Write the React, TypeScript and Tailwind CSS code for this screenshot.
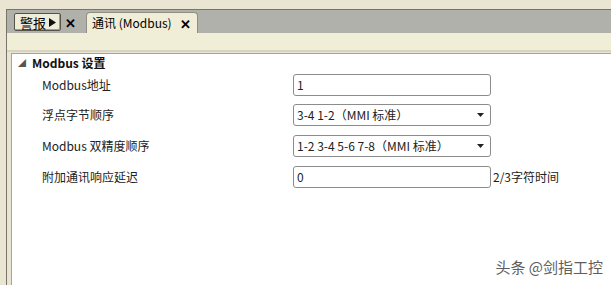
import React from "react";

const font = { fontFamily: '"Noto Sans CJK SC", "Noto Sans", sans-serif' };

type Row = { label: string; value: string; kind: "input" | "select"; suffix?: string; gap: string };

const rows: Row[] = [
  { label: "Modbus地址", value: "1", kind: "input", gap: "mt-[0px]" },
  { label: "浮点字节顺序", value: "3-4 1-2（MMI 标准）", kind: "select", gap: "mt-[8px]" },
  { label: "Modbus 双精度顺序", value: "1-2 3-4 5-6 7-8（MMI 标准）", kind: "select", gap: "mt-[9px]" },
  { label: "附加通讯响应延迟", value: "0", kind: "input", suffix: "2/3字符时间", gap: "mt-[9px]" },
];

const Field = ({ row }: { row: Row }) => (
  <div className={`flex items-center h-[22px] ${row.gap}`}>
    <div className="w-[281px] text-[12px] text-[#222] pl-[30px]">{row.label}</div>
    <div className="w-[198px] h-[22px] rounded-[3px] border border-[#8c8c8c] bg-white flex items-center px-[3px] text-[12px] text-[#222]">
      <span className="flex-1">{row.value}</span>
      {row.kind === "select" && (
        <svg width="7" height="4" viewBox="0 0 7 4" className="mr-[3px]">
          <path d="M0 0 L7 0 L3.5 4 Z" fill="#222" />
        </svg>
      )}
    </div>
    {row.suffix && <span className="ml-[2px] text-[12px] text-[#222]">{row.suffix}</span>}
  </div>
);

export default function App() {
  return (
    <div className="w-[611px] h-[285px] bg-[#e9e5d2] flex flex-col overflow-hidden relative" style={font}>
      <div className="h-[9px] shrink-0" />
      <div className="flex-1 flex flex-col ml-[6px] border-l border-t border-[#77746a]">
        {/* tab strip */}
        <div className="h-[23px] bg-[#b1b1ab] flex items-end pl-[7px] shrink-0 whitespace-nowrap">
          <div className="flex items-center self-start mt-[3px] shrink-0">
            <div className="h-[18px] pl-[5px] pr-[4px] flex items-center gap-[3px] bg-[#efecd9] border border-[#55534a] rounded-[2px] shadow-[inset_-1px_-1px_0_#a19e8e] text-[13px] text-black leading-none">
              <span>警报</span>
              <svg width="7" height="9" viewBox="0 0 7 9">
                <path d="M0 0 L7 4.5 L0 9 Z" fill="#111" />
              </svg>
            </div>
            <span className="ml-[4px] text-[13px] font-bold text-black leading-none">✕</span>
          </div>
          <div className="ml-[10px] h-[21px] shrink-0 rounded-t-[4px] border border-b-0 border-[#8f8d84] bg-[#f1eed7] flex items-center pl-[5px] pr-[6px] text-[12px] text-black leading-none">
            <span>通讯 (Modbus)</span>
            <span className="ml-[8px] text-[13px] font-bold">✕</span>
          </div>
        </div>
        {/* cream band */}
        <div className="h-[19px] bg-[#f1eed8] border-b-[2px] border-[#d6d3c2] shrink-0" />
        {/* content */}
        <div className="flex-1 flex pl-[4px] pt-[1px]">
          <div className="flex-1 bg-white border-l border-t border-[#a6a497] flex flex-col pt-[1px]">
            <div className="flex items-center h-[16px] text-[12px] font-semibold text-[#111]">
              <span className="w-[20px] text-[8px] text-[#555] pl-[6px]">◢</span>
              <span>Modbus 设置</span>
            </div>
            <div className="flex flex-col mt-[3px]">
              {rows.map((r) => (
                <Field key={r.label} row={r} />
              ))}
            </div>
          </div>
        </div>
      </div>
      <div className="absolute right-[8px] bottom-[7px] text-[15px] text-[#5e5e5e] [text-shadow:0_0_2px_#fff]">
        头条 @剑指工控
      </div>
    </div>
  );
}
